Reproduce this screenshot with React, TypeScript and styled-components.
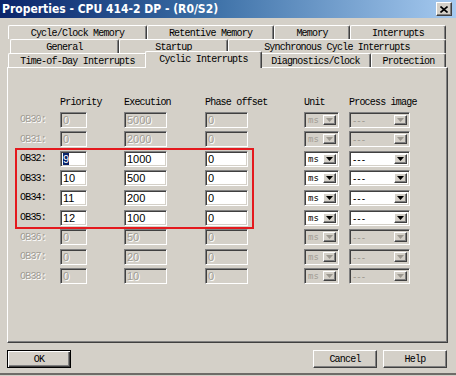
import styled, { createGlobalStyle, css } from 'styled-components';

const GlobalStyle = createGlobalStyle`
  html, body {
    margin: 0;
    padding: 0;
    background: #d4d0c8;
  }
  body {
    width: 456px;
    height: 376px;
    overflow: hidden;
  }
`;

type TabItem = { label: string; width: number; selected?: boolean };

const tabRows: { offset: number; tabs: TabItem[] }[] = [
  {
    offset: 8,
    tabs: [
      { label: 'Cycle/Clock Memory', width: 139 },
      { label: 'Retentive Memory', width: 127 },
      { label: 'Memory', width: 76 },
      { label: 'Interrupts', width: 96 },
    ],
  },
  {
    offset: 10,
    tabs: [
      { label: 'General', width: 109 },
      { label: 'Startup', width: 109 },
      { label: 'Synchronous Cycle Interrupts', width: 218 },
    ],
  },
  {
    offset: 8,
    tabs: [
      { label: 'Time-of-Day Interrupts', width: 139 },
      { label: 'Cyclic Interrupts', width: 113, selected: true },
      { label: 'Diagnostics/Clock', width: 111 },
      { label: 'Protection', width: 75 },
    ],
  },
];

type ObRow = {
  ob: string;
  priority: string;
  execution: string;
  phase: string;
  enabled: boolean;
  selected?: boolean;
};

const obRows: ObRow[] = [
  { ob: 'OB30', priority: '0', execution: '5000', phase: '0', enabled: false },
  { ob: 'OB31', priority: '0', execution: '2000', phase: '0', enabled: false },
  { ob: 'OB32', priority: '9', execution: '1000', phase: '0', enabled: true, selected: true },
  { ob: 'OB33', priority: '10', execution: '500', phase: '0', enabled: true },
  { ob: 'OB34', priority: '11', execution: '200', phase: '0', enabled: true },
  { ob: 'OB35', priority: '12', execution: '100', phase: '0', enabled: true },
  { ob: 'OB36', priority: '0', execution: '50', phase: '0', enabled: false },
  { ob: 'OB37', priority: '0', execution: '20', phase: '0', enabled: false },
  { ob: 'OB38', priority: '0', execution: '10', phase: '0', enabled: false },
];

const DropArrow = ({ disabled }: { disabled: boolean }) => (
  <svg width="7" height="4" viewBox="0 0 7 4">
    <polygon points="0,0 7,0 3.5,4" fill={disabled ? '#9a968e' : '#000'} />
  </svg>
);

const CloseIcon = () => (
  <svg width="8" height="7" viewBox="0 0 8 7">
    <path d="M0.5 0.5 L7.5 6.5 M7.5 0.5 L0.5 6.5" stroke="#000" strokeWidth="1.6" />
  </svg>
);

const App = () => {
  return (
    <>
      <GlobalStyle />
      <Window>
        <TitleBar>
          <Title>Properties - CPU 414-2 DP - (R0/S2)</Title>
          <CloseButton>
            <CloseIcon />
          </CloseButton>
        </TitleBar>

        <TabStack>
          {tabRows.map((row, i) => (
            <TabRow key={i} $offset={row.offset} $front={i === tabRows.length - 1}>
              {row.tabs.map((tab) => (
                <Tab key={tab.label} $width={tab.width} $selected={!!tab.selected}>
                  {tab.label}
                </Tab>
              ))}
            </TabRow>
          ))}
        </TabStack>

        <Panel>
          <Grid>
            <HeadRow>
              <span />
              <ColHead>Priority</ColHead>
              <ColHead>Execution</ColHead>
              <ColHead>Phase offset</ColHead>
              <ColHead>Unit</ColHead>
              <ColHead>Process image</ColHead>
            </HeadRow>

            {obRows.map((r, i) => (
              <Row key={r.ob} $row={i + 2}>
                <ObLabel $disabled={!r.enabled}>{r.ob}:</ObLabel>
                <Field $width={27} $disabled={!r.enabled}>
                  {r.selected ? <Selection>{r.priority}</Selection> : r.priority}
                </Field>
                <Field $width={43} $disabled={!r.enabled}>
                  {r.execution}
                </Field>
                <Field $width={43} $disabled={!r.enabled}>
                  {r.phase}
                </Field>
                <Combo $width={35} $disabled={!r.enabled}>
                  <ComboText $unit>ms</ComboText>
                  <ComboButton>
                    <DropArrow disabled={!r.enabled} />
                  </ComboButton>
                </Combo>
                <Combo $width={61} $disabled={!r.enabled}>
                  <ComboText>---</ComboText>
                  <ComboButton>
                    <DropArrow disabled={!r.enabled} />
                  </ComboButton>
                </Combo>
              </Row>
            ))}

            <Highlight />
          </Grid>
        </Panel>

        <Footer>
          <DialogButton $default>OK</DialogButton>
          <Spacer />
          <DialogButton>Cancel</DialogButton>
          <DialogButton>Help</DialogButton>
        </Footer>
      </Window>
    </>
  );
};

export default App;

const monoText = css`
  font-family: 'Liberation Mono', 'DejaVu Sans Mono', monospace;
  font-size: 10px;
  letter-spacing: -0.8px;
  color: #000;
`;

const sunken = css`
  border-style: solid;
  border-width: 1px;
  border-color: #808080 #ffffff #ffffff #808080;
  box-shadow: inset 1px 1px #404040, inset -1px -1px #d4d0c8;
`;

const raised = css`
  border-style: solid;
  border-width: 1px;
  border-color: #ffffff #404040 #404040 #ffffff;
  box-shadow: inset -1px -1px #808080, inset 1px 1px #d4d0c8;
`;

const columns = '40px 64px 81px 99px 45px 61px';

const Window = styled.div`
  display: flex;
  flex-direction: column;
  width: 456px;
  height: 375px;
  box-sizing: border-box;
  border-bottom: 2px solid #6e6c68;
  background: #d4d0c8;
`;

const TitleBar = styled.div`
  display: flex;
  align-items: center;
  justify-content: space-between;
  height: 18px;
  padding: 0 4px 0 2px;
  background: linear-gradient(to right, #0a246a 0%, #3a6ea5 45%, #a6caf0 100%);
`;

const Title = styled.div`
  font-family: 'DejaVu Sans Condensed', 'DejaVu Sans', sans-serif;
  font-weight: bold;
  font-size: 12px;
  color: #ffffff;
  white-space: nowrap;
`;

const CloseButton = styled.div`
  ${raised};
  display: flex;
  align-items: center;
  justify-content: center;
  width: 16px;
  height: 14px;
  box-sizing: border-box;
  background: #d4d0c8;
`;

const TabStack = styled.div`
  display: flex;
  flex-direction: column;
  margin-top: 7px;
`;

const TabRow = styled.div<{ $offset: number; $front: boolean }>`
  display: flex;
  height: 14px;
  padding-left: ${(p) => p.$offset}px;
  position: relative;
  z-index: ${(p) => (p.$front ? 2 : 0)};
`;

const Tab = styled.div<{ $width: number; $selected: boolean }>`
  ${monoText};
  display: flex;
  align-items: center;
  justify-content: center;
  box-sizing: border-box;
  width: ${(p) => p.$width}px;
  height: 14px;
  flex-shrink: 0;
  background: #d4d0c8;
  border-top: 1px solid #ffffff;
  border-left: 1px solid #ffffff;
  border-right: 1px solid #404040;
  border-radius: 2px 2px 0 0;
  box-shadow: inset -1px 0 #808080;
  padding-top: 1px;

  ${(p) =>
    p.$selected &&
    css`
      position: relative;
      z-index: 3;
      width: ${p.$width + 4}px;
      height: 17px;
      margin: -2px -2px -1px -2px;
      padding-bottom: 3px;
    `}
`;

const Panel = styled.div`
  ${raised};
  box-shadow: inset -1px -1px #808080;
  height: 276px;
  box-sizing: border-box;
  margin: 0 8px 0 7px;
  padding: 27px 0 0 12px;
  position: relative;
  z-index: 1;
`;

const Grid = styled.div`
  display: grid;
  grid-template-columns: 1fr;
  grid-template-rows: 13px repeat(9, 16px);
  row-gap: 3.6px;
  width: 390px;
`;

const HeadRow = styled.div`
  grid-row: 1;
  grid-column: 1;
  display: grid;
  grid-template-columns: ${columns};
  align-items: end;
`;

const Row = styled.div<{ $row: number }>`
  grid-row: ${(p) => p.$row};
  grid-column: 1;
  display: grid;
  grid-template-columns: ${columns};
  align-items: center;
`;

const ColHead = styled.div`
  ${monoText};
  line-height: 11px;
  white-space: nowrap;
`;

const ObLabel = styled.div<{ $disabled: boolean }>`
  ${monoText};
  white-space: nowrap;
  ${(p) =>
    p.$disabled &&
    css`
      color: #a09c94;
      text-shadow: 1px 1px #ffffff;
    `}
`;

const Field = styled.div<{ $width: number; $disabled: boolean }>`
  ${sunken};
  box-sizing: border-box;
  width: ${(p) => p.$width}px;
  height: 16px;
  padding: 1px 0 0 2px;
  font-family: 'Liberation Sans', Arial, sans-serif;
  font-size: 11px;
  line-height: 12px;
  background: ${(p) => (p.$disabled ? '#d4d0c8' : '#ffffff')};
  color: ${(p) => (p.$disabled ? '#a09c94' : '#000000')};
  text-shadow: ${(p) => (p.$disabled ? '1px 1px #ffffff' : 'none')};
  overflow: hidden;
`;

const Selection = styled.span`
  background: #0a246a;
  color: #ffffff;
`;

const Combo = styled.div<{ $width: number; $disabled: boolean }>`
  ${sunken};
  display: flex;
  align-items: stretch;
  box-sizing: border-box;
  width: ${(p) => p.$width}px;
  height: 16px;
  padding: 2px;
  background: ${(p) => (p.$disabled ? '#d4d0c8' : '#ffffff')};
  color: ${(p) => (p.$disabled ? '#a09c94' : '#000000')};
`;

const ComboText = styled.div<{ $unit?: boolean }>`
  flex: 1;
  font-family: ${(p) => (p.$unit ? "'DejaVu Sans Mono', monospace" : "'Liberation Sans', sans-serif")};
  font-size: ${(p) => (p.$unit ? '9px' : '10px')};
  line-height: 11px;
  padding-left: 1px;
  letter-spacing: ${(p) => (p.$unit ? '0px' : '1px')};
  color: inherit;
`;

const ComboButton = styled.div`
  ${raised};
  display: flex;
  align-items: center;
  justify-content: center;
  box-sizing: border-box;
  width: 13px;
  background: #d4d0c8;
`;

const Highlight = styled.div`
  grid-row: 4 / 8;
  grid-column: 1;
  margin: -3px 156px -3px -5px;
  border: 2px solid #e4191e;
  pointer-events: none;
`;

const Footer = styled.div`
  display: flex;
  gap: 6px;
  padding: 7px 9px 0 7px;
`;

const Spacer = styled.div`
  flex: 1;
`;

const DialogButton = styled.div<{ $default?: boolean }>`
  ${raised};
  ${monoText};
  display: flex;
  align-items: center;
  justify-content: center;
  box-sizing: border-box;
  width: 64px;
  height: 18px;
  background: #d4d0c8;
  ${(p) =>
    p.$default &&
    css`
      border-color: #000;
      box-shadow: inset 1px 1px #ffffff, inset -1px -1px #404040, inset -2px -2px #808080;
    `}
`;
